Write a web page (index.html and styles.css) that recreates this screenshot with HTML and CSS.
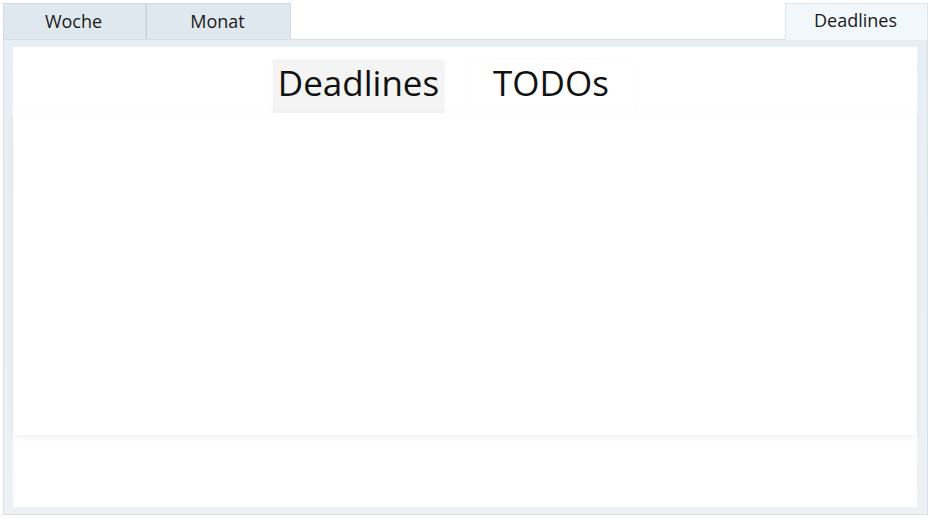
FILE: index.html
```html
<!DOCTYPE html>
<html>
<head>
<meta charset="utf-8">
<link rel="stylesheet" href="styles.css">
</head>
<body>
<div class="window">
  <div class="tabbar">
    <div class="tab">Woche</div>
    <div class="tab">Monat</div>
    <div class="spacer"></div>
    <div class="tab active">Deadlines</div>
  </div>
  <div class="pane">
    <div class="inner">
      <div class="subtabs">
        <div class="subtab">Deadlines</div>
        <div class="subtab selected">TODOs</div>
      </div>
      <div class="content"></div>
      <div class="footer"></div>
    </div>
  </div>
</div>
</body>
</html>
```

FILE: styles.css
```css
html, body {
  margin: 0;
  padding: 0;
  background: #ffffff;
  font-family: "Open Sans", "Noto Sans", sans-serif;
}
.window {
  width: 932px;
  height: 519px;
  padding: 3px 4px 4px 3px;
  box-sizing: border-box;
  display: flex;
  flex-direction: column;
}
.tabbar {
  display: flex;
  height: 36px;
  align-items: flex-end;
}
.tab {
  height: 36px;
  box-sizing: border-box;
  background: #dfe8ee;
  border: 1px solid #d2dbe1;
  border-bottom: none;
  color: #1a1a1a;
  font-size: 18px;
  display: flex;
  align-items: center;
  justify-content: center;
  width: 143px;
  padding-bottom: 2px;
  padding-right: 2px;
}
.tab + .tab {
  border-left: 1px solid #c9d2d8;
  width: 145px;
}
.spacer { flex: 1; }
.tab.active {
  width: 143px;
  background: #f1f7fb;
  border-color: #e0e6ea;
  height: 37px;
  margin-bottom: -1px;
  position: relative;
  z-index: 1;
  padding-bottom: 4px;
}
.pane {
  flex: 1;
  background: linear-gradient(#e8eff4, #edf1f4);
  border: 1px solid #d9dfe3;
  padding: 7px 10px 7px 9px;
  display: flex;
}
.inner {
  flex: 1;
  background: #ffffff;
  display: flex;
  flex-direction: column;
}
.subtabs {
  display: flex;
  padding-left: 260px;
  gap: 22px;
  padding-top: 13px;
  height: 53px;
}
.subtab {
  width: 171px;
  height: 53px;
  box-sizing: border-box;
  background: #f4f4f4;
  font-size: 35px;
  color: #111111;
  display: flex;
  justify-content: center;
  align-items: center;
  padding-bottom: 8px;
  box-shadow: 0 0 4px rgba(0,0,0,0.05);
}
.subtab.selected {
  background: #ffffff;
  width: 170px;
  box-shadow: 0 0 3px rgba(0,0,0,0.04);
}
.content {
  height: 322px;
  background: #ffffff;
  box-shadow: 0 2px 6px rgba(0,0,0,0.07);
  position: relative;
  z-index: 1;
  margin-right: 1px;
}
.footer {
  flex: 1;
  background: #ffffff;
}
```
